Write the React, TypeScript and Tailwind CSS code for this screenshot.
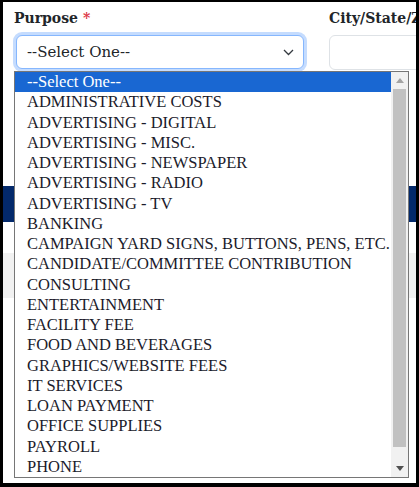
const options = [
  '--Select One--',
  'ADMINISTRATIVE COSTS',
  'ADVERTISING - DIGITAL',
  'ADVERTISING - MISC.',
  'ADVERTISING - NEWSPAPER',
  'ADVERTISING - RADIO',
  'ADVERTISING - TV',
  'BANKING',
  'CAMPAIGN YARD SIGNS, BUTTONS, PENS, ETC.',
  'CANDIDATE/COMMITTEE CONTRIBUTION',
  'CONSULTING',
  'ENTERTAINMENT',
  'FACILITY FEE',
  'FOOD AND BEVERAGES',
  'GRAPHICS/WEBSITE FEES',
  'IT SERVICES',
  'LOAN PAYMENT',
  'OFFICE SUPPLIES',
  'PAYROLL',
  'PHONE',
]

const labelFont = "font-['DejaVu_Serif',serif]"

export default function App() {
  return (
    <div className="relative w-[419px] h-[487px] overflow-hidden bg-white border-black border-l-[3px] border-r-[3px] border-t-[2px] border-b-[4px]">
      {/* form row */}
      <div className="flex gap-6 pl-[11px] pt-[6px]">
        <div className="w-[291px] shrink-0">
          <label className={`${labelFont} block text-[14px] font-bold text-[#212529] leading-[20px]`}>
            Purpose <span className="text-[#dc3545]">*</span>
          </label>
          <div className="mt-[7px] ml-[2px] mr-[1px] h-[34px] rounded-[6px] border border-[#86b7fe] ring-[3px] ring-[#c5dcfe] bg-white flex items-center justify-between pl-[10px] pr-[9px]">
            <span className={`${labelFont} text-[15px] text-[#212529]`}>--Select One--</span>
            <svg width="11" height="7" viewBox="0 0 11 7" className="mt-[1px]">
              <polyline points="1,1 5.5,5.5 10,1" fill="none" stroke="#343a40" strokeWidth="1.3" />
            </svg>
          </div>
        </div>
        <div className="flex-1 min-w-0">
          <label className={`${labelFont} block text-[14px] font-bold text-[#212529] leading-[20px] whitespace-nowrap`}>
            City/State/Zip
          </label>
          <div className="mt-[7px] h-[35px] w-[120px] rounded-[6px] border border-[#dee2e6] bg-white" />
        </div>
      </div>

      {/* content under the dropdown */}
      <div className="mt-[116px] h-[36px] bg-[#03296b]" />
      <div className="mt-[31px] h-[45px] bg-[#f1f1f1]" />

      {/* open listbox */}
      <div className="absolute left-[11px] top-[69px] w-[395px] h-[407px] border border-[#767676] bg-white flex font-['Liberation_Serif',serif] text-[16.5px]">
        <ul className="flex-1 min-w-0">
          {options.map((o, i) => (
            <li
              key={o}
              className={`h-[20.25px] leading-[20.25px] pl-[12px] whitespace-nowrap ${i === 0 ? 'bg-[#1967d2] text-white' : 'text-[#1b1b2b]'}`}
            >
              {o}
            </li>
          ))}
        </ul>
        <div className="w-[17px] bg-[#f1f1f1] flex flex-col items-center">
          <div className="h-[17px] flex items-center justify-center">
            <svg width="8" height="5" viewBox="0 0 8 5">
              <polygon points="0,5 4,0 8,5" fill="#a3a3a3" />
            </svg>
          </div>
          <div className="w-[13px] h-[358px] bg-[#c1c1c1]" />
          <div className="flex-1" />
          <div className="h-[17px] flex items-center justify-center">
            <svg width="8" height="5" viewBox="0 0 8 5">
              <polygon points="0,0 8,0 4,5" fill="#505050" />
            </svg>
          </div>
        </div>
      </div>
    </div>
  )
}
